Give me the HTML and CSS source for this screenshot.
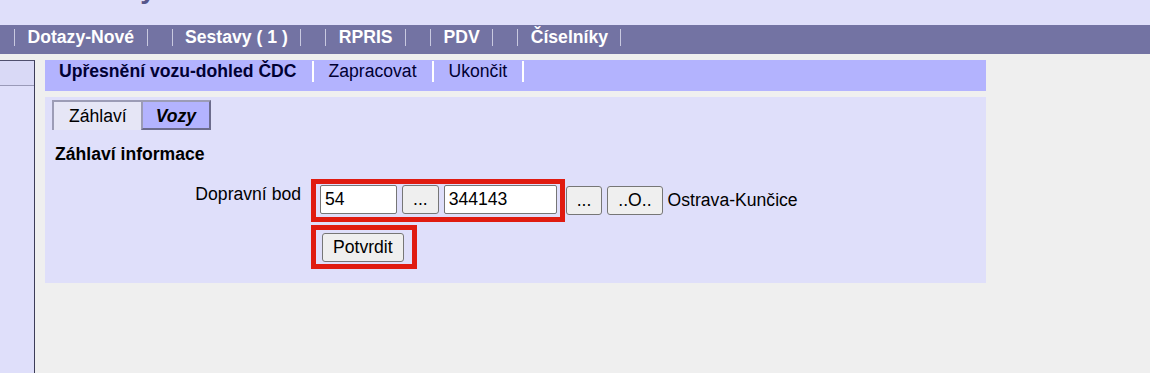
FILE: index.html
```html
<!DOCTYPE html>
<html lang="cs">
<head>
    <meta charset="UTF-8">
    <title>Upřesnění vozu-dohled ČDC</title>
    <link rel="stylesheet" href="styles.css">
</head>
<body>
    <header class="top">
        <h1>Sestavy</h1>
    </header>
    <nav class="menu">
        <a href="#">Dotazy-Nové</a>
        <a href="#">Sestavy ( 1 )</a>
        <a href="#">RPRIS</a>
        <a href="#">PDV</a>
        <a href="#">Číselníky</a>
    </nav>
    <div class="main">
        <div class="sidebar">
            <div class="side-item"></div>
        </div>
        <div class="content">
            <div class="actions">
                <span class="action current">Upřesnění vozu-dohled ČDC</span>
                <a class="action" href="#">Zapracovat</a>
                <a class="action" href="#">Ukončit</a>
            </div>
            <div class="panel">
                <div class="subtabs">
                    <span class="subtab active">Záhlaví</span>
                    <span class="subtab other">Vozy</span>
                </div>
                <h2>Záhlaví informace</h2>
                <div class="form">
                    <label class="form-label" for="bod1">Dopravní bod</label>
                    <div class="form-field">
                        <div class="highlight">
                            <input id="bod1" class="code" type="text" value="54">
                            <button>...</button>
                            <input class="number" type="text" value="344143">
                        </div>
                        <button>...</button>
                        <button>..O..</button>
                        <span class="place">Ostrava-Kunčice</span>
                    </div>
                    <span></span>
                    <div class="form-field">
                        <div class="highlight confirm">
                            <button>Potvrdit</button>
                        </div>
                    </div>
                </div>
            </div>
        </div>
    </div>
</body>
</html>
```

FILE: styles.css
```css
* {
    box-sizing: border-box;
}
body {
    margin: 0;
    background-color: #efefef;
    color: #000;
    font-family: "Liberation Sans", Arial, sans-serif;
    font-size: 17.6px;
}
.top {
    height: 25px;
    background-color: #dfdffa;
    overflow: hidden;
}
.top h1 {
    margin: -25px 0 0 0;
    padding-left: 50px;
    font-size: 28px;
    line-height: 28px;
    color: #55558a;
}
.menu {
    display: flex;
    align-items: flex-start;
    height: 29px;
    padding: 4px 0 0 14px;
    background-color: #7373a3;
}
.menu a {
    color: white;
    text-decoration: none;
    font-weight: bold;
    line-height: 17px;
    padding: 0 12.5px;
    margin-right: 24px;
    border-left: 1px solid #c9c9e0;
    border-right: 1px solid #c9c9e0;
}
.main {
    display: flex;
    gap: 10px;
    padding-top: 6px;
}
.sidebar {
    width: 35px;
    min-height: 313px;
    background-color: #dfdffa;
    border-top: 1px solid #50506e;
    border-right: 1px solid #3c3c58;
}
.side-item {
    height: 25px;
    background-color: #d9d9f6;
    border-bottom: 1px solid #9a9ab8;
}
.content {
    width: 941px;
}
.actions {
    display: flex;
    align-items: flex-start;
    height: 31px;
    padding-top: 1px;
    background-color: #b3b3fe;
}
.action {
    line-height: 21px;
    padding: 0 15px;
    border-right: 2px solid white;
    color: #000033;
    text-decoration: none;
}
.action:first-child {
    padding-left: 14px;
}
.action.current {
    font-weight: bold;
}
.panel {
    margin-top: 6px;
    padding: 3px 0 14px 0;
    background-color: #dfdffa;
}
.subtabs {
    display: flex;
    padding-left: 7px;
}
.subtab {
    line-height: 20px;
    padding: 4px 13px 2px 13px;
    border: 2px solid;
    border-color: #9c9cb6 #6c6c8c #6c6c8c #9c9cb6;
}
.subtab.active {
    background-color: #e6e6f6;
    border-right: none;
    border-bottom: none;
    padding-left: 15px;
    padding-right: 14px;
}
.subtab.other {
    background-color: #b3b3fe;
    font-weight: bold;
    font-style: italic;
}
.panel h2 {
    margin: 14px 0 15px 10px;
    font-size: 17.6px;
    line-height: 20px;
}
.form {
    display: grid;
    grid-template-columns: 256px auto;
    column-gap: 10px;
    row-gap: 3px;
}
.form-label {
    text-align: right;
    line-height: 20px;
    padding-top: 5px;
}
.form-field {
    display: flex;
    align-items: center;
    gap: 5px;
}
.highlight {
    display: flex;
    gap: 5px;
    padding: 1px 3px 3px 4px;
    border: 5px solid #e01b10;
    margin-right: -4px;
}
.highlight.confirm {
    padding: 3px 8px 2px 6px;
}
input {
    height: 29px;
    padding: 0 4px;
    border: 1px solid #767676;
    border-radius: 2px;
    background: white;
    font-family: inherit;
    font-size: 17.6px;
}
input.code {
    width: 77px;
}
input.number {
    width: 113px;
}
button {
    height: 29px;
    padding: 0 10px;
    border: 1px solid #767676;
    border-radius: 3px;
    background-color: #efefef;
    color: #000;
    font-family: inherit;
    font-size: 17.6px;
}
```
